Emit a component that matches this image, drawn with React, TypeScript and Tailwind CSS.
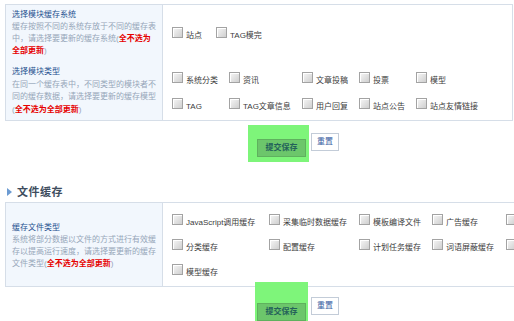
import React from "react";

const font = { fontFamily: '"Liberation Sans", "Noto Sans CJK SC", sans-serif' } as React.CSSProperties;

function Box({ label }: { label?: string }) {
  return (
    <div className="flex items-end whitespace-nowrap">
      <span className="block w-[11px] h-[11px] shrink-0 border border-[#a3a3a3] bg-gradient-to-br from-[#f7f7f7] to-[#cfcfcf] shadow-[inset_1px_1px_0_#fff]" />
      {label ? (
        <span className="ml-[3px] text-[8px] leading-[9px] text-[#3c3c3c] translate-y-[2px]">{label}</span>
      ) : null}
    </div>
  );
}

function Red({ children }: { children: React.ReactNode }) {
  return <b className="text-[#e60000] font-bold">{children}</b>;
}

function Buttons({ top, green }: { top: string; green: string }) {
  return (
    <div className={`flex items-start gap-[5px] pl-[257px] ${top}`}>
      <div className="relative">
        <span className={`absolute ${green} bg-[#7ef57a]`} />
        <button className="relative w-[49px] h-[18px] bg-[#6cc66b] border border-[#5fb15e] text-[8px] font-bold text-[#24615a]">
          提交保存
        </button>
      </div>
      <button className="w-[28px] h-[18px] bg-white border border-[#c3ccd8] text-[8px] text-[#3b5ea3]">
        重置
      </button>
    </div>
  );
}

export default function App() {
  return (
    <div className="w-[514px] h-[321px] overflow-hidden bg-white relative" style={font}>
      {/* table 1 */}
      <div className="ml-[5px] mt-[4px] w-[508px] h-[117px] border border-[#d6dee8] flex">
        <div className="w-[157px] shrink-0 bg-[#f2f7fd] border-r border-[#d6dee8] flex flex-col">
          <div className="h-[57px] pl-[6px] pt-[4px] text-[8px] leading-[12px] whitespace-nowrap">
            <div className="text-[#24508f]">选择模块缓存系统</div>
            <div className="text-[#96a6b9]">
              缓存按照不同的系统存放于不同的缓存表<br />
              中，请选择要更新的缓存系统(<Red>全不选为</Red>
              <br />
              <Red>全部更新</Red>)
            </div>
          </div>
          <div className="pl-[6px] pt-[4px] text-[8px] leading-[12.5px] whitespace-nowrap">
            <div className="text-[#24508f]">选择模块类型</div>
            <div className="text-[#96a6b9]">
              在同一个缓存表中，不同类型的模块者不<br />
              同的缓存数据，请选择要更新的缓存模型<br />
              (<Red>全不选为全部更新</Red>)
            </div>
          </div>
        </div>
        <div className="flex-1 flex flex-col pl-[9px]">
          <div className="h-[57px] flex items-center gap-[14px] pb-[2px]">
            <Box label="站点" />
            <Box label="TAG模完" />
          </div>
          <div className="flex-1 grid grid-cols-[57px_73px_57px_57px_auto] content-center gap-y-[15px] pb-[2px]">
            <Box label="系统分类" />
            <Box label="资讯" />
            <Box label="文章投稿" />
            <Box label="投票" />
            <Box label="模型" />
            <Box label="TAG" />
            <Box label="TAG文章信息" />
            <Box label="用户回复" />
            <Box label="站点公告" />
            <Box label="站点友情链接" />
          </div>
        </div>
      </div>

      <Buttons top="mt-[12px]" green="-left-[9px] -right-[3px] -top-[8px] -bottom-[5px]" />

      {/* heading */}
      <div className="mt-[29px] ml-[7px] flex items-center h-[12px]">
        <span className="w-0 h-0 border-y-[4px] border-y-transparent border-l-[5px] border-l-[#6c9bd2]" />
        <span className="ml-[5px] text-[11px] font-bold text-[#3e4d5e] tracking-[0.5px]">文件缓存</span>
      </div>

      {/* table 2 */}
      <div className="ml-[5px] mt-[4px] w-[620px] h-[85px] border border-[#d6dee8] flex">
        <div className="w-[157px] shrink-0 bg-[#f2f7fd] border-r border-[#d6dee8] flex flex-col justify-center pl-[6px] pt-[2px] text-[8px] leading-[12px] whitespace-nowrap">
          <div className="text-[#24508f]">缓存文件类型</div>
          <div className="text-[#96a6b9]">
            系统将部分数据以文件的方式进行有效缓<br />
            存以提高运行速度，请选择要更新的缓存<br />
            文件类型(<Red>全不选为全部更新</Red>)
          </div>
        </div>
        <div className="flex-1 grid grid-cols-[97px_90px_73px_74px_auto] content-center gap-y-[14px] pl-[9px] pb-[1px]">
          <Box label="JavaScript调用缓存" />
          <Box label="采集临时数据缓存" />
          <Box label="模板编译文件" />
          <Box label="广告缓存" />
          <Box />
          <Box label="分类缓存" />
          <Box label="配置缓存" />
          <Box label="计划任务缓存" />
          <Box label="词语屏蔽缓存" />
          <Box />
          <Box label="模型缓存" />
        </div>
      </div>

      <Buttons top="mt-[10px]" green="-left-[2px] -right-[2px] -top-[15px] -bottom-[2px]" />
    </div>
  );
}
